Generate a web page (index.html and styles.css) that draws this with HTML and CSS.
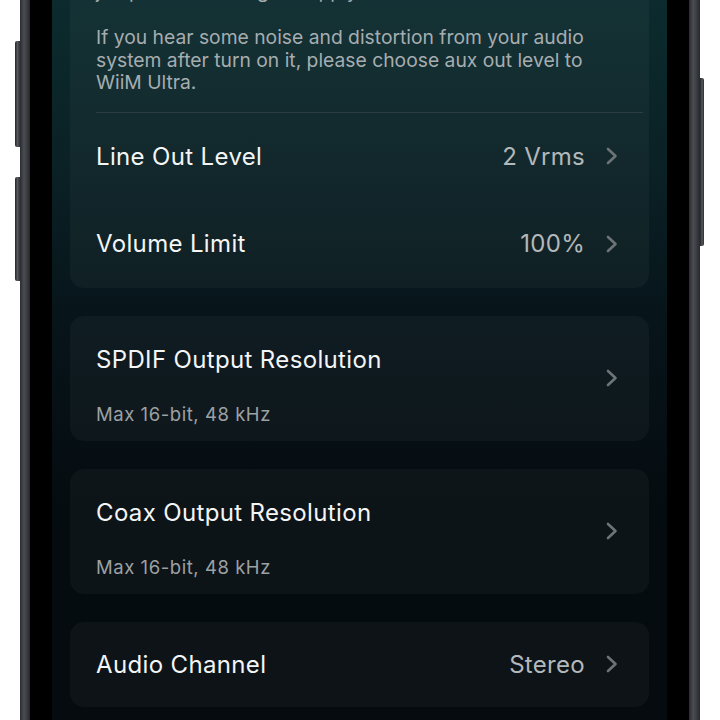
FILE: index.html
```html
<!DOCTYPE html>
<html lang="en">
<head>
    <meta charset="UTF-8">
    <meta name="viewport" content="width=device-width, initial-scale=1.0">
    <title>Audio Output</title>
    <link rel="stylesheet" href="styles.css">
</head>
<body>
    <div class="device">
        <div class="side side-left">
            <span class="key key-up"></span>
            <span class="key key-down"></span>
        </div>
        <div class="frame"></div>
        <div class="bezel bezel-left"></div>

        <div class="screen">
            <div class="card card-top">
                <p class="note note-cut">jump to aux settings to apply.</p>
                <p class="note">If you hear some noise and distortion from your audio system after turn on it, please choose aux out level to WiiM Ultra.</p>
                <div class="divider"></div>
                <div class="row">
                    <span class="title">Line Out Level</span>
                    <span class="value">2 Vrms</span>
                    <svg class="chevron" viewBox="0 0 12 18"><path d="M2 2l7.5 7-7.5 7"/></svg>
                </div>
                <div class="row">
                    <span class="title">Volume Limit</span>
                    <span class="value">100%</span>
                    <svg class="chevron" viewBox="0 0 12 18"><path d="M2 2l7.5 7-7.5 7"/></svg>
                </div>
            </div>

            <div class="card card-sub">
                <div class="text">
                    <span class="title">SPDIF Output Resolution</span>
                    <span class="sub">Max 16-bit, 48 kHz</span>
                </div>
                <svg class="chevron" viewBox="0 0 12 18"><path d="M2 2l7.5 7-7.5 7"/></svg>
            </div>

            <div class="card card-sub">
                <div class="text">
                    <span class="title">Coax Output Resolution</span>
                    <span class="sub">Max 16-bit, 48 kHz</span>
                </div>
                <svg class="chevron" viewBox="0 0 12 18"><path d="M2 2l7.5 7-7.5 7"/></svg>
            </div>

            <div class="card">
                <div class="row row-single">
                    <span class="title">Audio Channel</span>
                    <span class="value">Stereo</span>
                    <svg class="chevron" viewBox="0 0 12 18"><path d="M2 2l7.5 7-7.5 7"/></svg>
                </div>
            </div>
        </div>

        <div class="bezel bezel-right"></div>
        <div class="frame"></div>
        <div class="side side-right">
            <span class="key key-power"></span>
        </div>
    </div>
</body>
</html>
```

FILE: styles.css
```css
body {
    margin: 0;
    background-color: #fff;
    font-family: Inter, "Noto Sans", sans-serif;
}
.device {
    display: flex;
    width: 720px;
    height: 720px;
    overflow: hidden;
    padding: 0 16px 0 15px;
    box-sizing: border-box;
}
.side {
    width: 5px;
    display: flex;
    flex-direction: column;
}
.key {
    display: block;
    background: linear-gradient(90deg, #222428, #55585d 50%, #2c2e32);
    border-radius: 2px 0 0 2px;
}
.side-left .key-up {
    margin-top: 41px;
    height: 106px;
}
.side-left .key-down {
    margin-top: 30px;
    height: 104px;
}
.side-right {
    width: 4px;
}
.side-right .key-power {
    margin-top: 78px;
    height: 168px;
    border-radius: 0 2px 2px 0;
}
.frame {
    width: 10px;
    background: linear-gradient(90deg, #2a2c30, #4a4d52 40%, #3a3c41 70%, #25272b);
}
.bezel-right + .frame {
    width: 11px;
}
.bezel {
    background-color: #000;
    width: 22px;
}
.screen {
    flex: 1;
    padding: 0 18px;
    background: linear-gradient(180deg, #0c2b2e 0%, #0a2024 25%, #07141a 45%, #050c10 70%, #050b0f 100%);
    display: flex;
    flex-direction: column;
    gap: 28px;
}
.card {
    background-color: rgba(255, 255, 255, 0.035);
    border-radius: 14px;
    padding: 0 31px 0 26px;
}
.card-top {
    padding-right: 6px;
    border-radius: 0 0 14px 14px;
}
.note {
    margin: 0;
    font-size: 19.3px;
    line-height: 22.5px;
    color: #a6adb0;
    padding-right: 25px;
}
.note-cut {
    margin-top: -20px;
    margin-bottom: 23.5px;
    white-space: nowrap;
}
.divider {
    height: 1px;
    background-color: #2c3d41;
    margin-top: 18px;
}
.row {
    display: flex;
    align-items: center;
    height: 87.5px;
}
.row-single {
    height: 85px;
}
.card-top .row {
    padding-right: 25px;
}
.title {
    font-size: 24px;
    letter-spacing: 0.35px;
    line-height: 29px;
    color: #f3f5f6;
    flex: 1;
}
.value {
    font-size: 24px;
    letter-spacing: 0.3px;
    color: #b3b8ba;
    margin-right: 21px;
}
.chevron {
    width: 12px;
    height: 18px;
    fill: none;
    stroke: #6c7477;
    stroke-width: 2.6;
    stroke-linecap: round;
    stroke-linejoin: round;
}
.card-sub {
    display: flex;
    align-items: center;
    height: 125px;
    box-sizing: border-box;
}
.text {
    flex: 1;
    display: flex;
    flex-direction: column;
    gap: 28.5px;
    padding: 29.5px 0 16px;
}
.sub {
    font-size: 18.5px;
    letter-spacing: 0.55px;
    line-height: 22px;
    color: #9ca1a4;
}
```
